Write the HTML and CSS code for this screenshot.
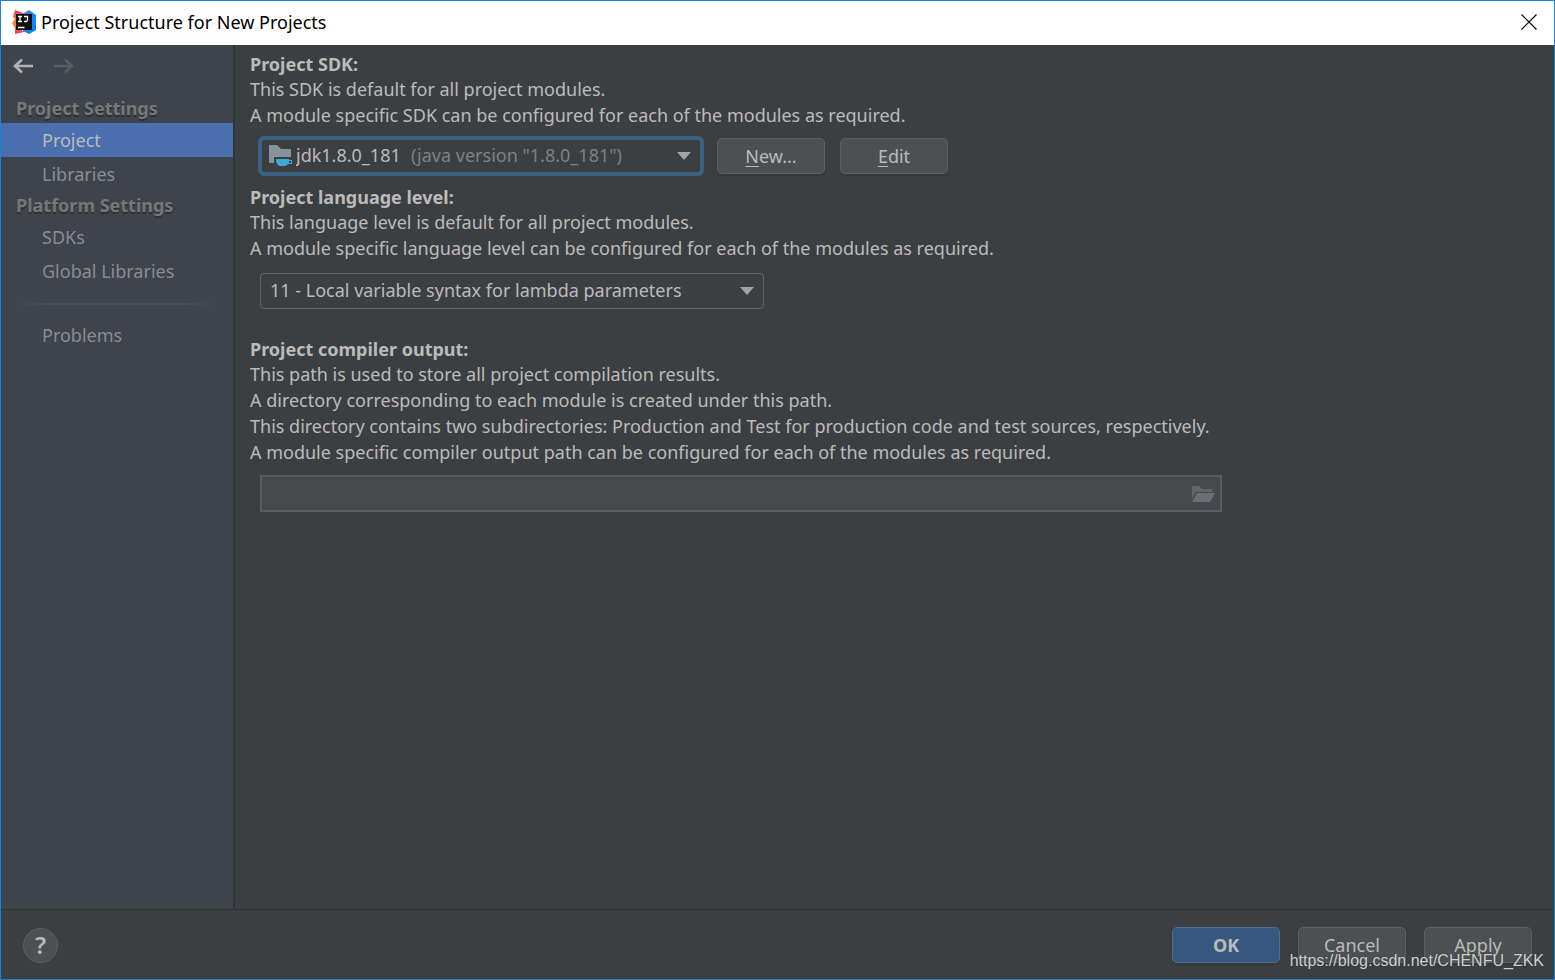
FILE: index.html
```html
<!DOCTYPE html>
<html lang="en">
<head>
<meta charset="utf-8">
<title>Project Structure for New Projects</title>
<link rel="stylesheet" href="styles.css">
</head>
<body>
<div class="window">
  <header class="titlebar">
    <svg class="logo" viewBox="0 0 24 24" aria-hidden="true">
      <defs>
        <linearGradient id="warm" x1="0" y1="0" x2="0" y2="1">
          <stop offset="0" stop-color="#f0325f"/><stop offset=".42" stop-color="#fb7a3a"/><stop offset=".6" stop-color="#fb8a2c"/><stop offset="1" stop-color="#f0325f"/>
        </linearGradient>
        <linearGradient id="cool" x1="0" y1="0" x2="1" y2="1">
          <stop offset="0" stop-color="#a56fb8"/><stop offset=".4" stop-color="#1689f5"/><stop offset="1" stop-color="#087cfa"/>
        </linearGradient>
      </defs>
      <path fill="url(#warm)" d="M3 0 11 3 10 21 13 21 12 22 3 24 3 18 0 13 3 9 1 7z"/>
      <path fill="url(#cool)" d="M10 4 17 0 24 5V20L17 24 11 21z"/>
      <path fill="#111" d="M4 4h16v16H4z"/>
      <path fill="none" stroke="#fff" stroke-width="1.3" d="M6 6.500h4M8 6.500v5M6 11.500h4M12 6.500h3.500v3.500q0 1.500-1.500 1.500h-2M6 17.500h6.500"/>
    </svg>
    <h1 class="title">Project Structure for New Projects</h1>
    <button class="close" type="button" aria-label="Close">
      <svg viewBox="0 0 16 16" width="16" height="16"><path d="M.5.5l15 15M15.500.5l-15 15" fill="none" stroke="#000" stroke-width="1.2"/></svg>
    </button>
  </header>

  <div class="body">
    <aside class="sidebar">
      <div class="history">
        <button class="arrow" type="button" aria-label="Back">
          <svg viewBox="0 0 20 16" width="20" height="16"><path d="M20 8H2M9 1.500 2 8l7 6.500" fill="none" stroke="currentColor" stroke-width="2.600"/></svg>
        </button>
        <button class="arrow" type="button" aria-label="Forward" disabled>
          <svg viewBox="0 0 20 16" width="20" height="16"><path d="M0 8h18M11 1.500 18 8l-7 6.500" fill="none" stroke="currentColor" stroke-width="2.600"/></svg>
        </button>
      </div>
      <nav class="nav">
        <h2 class="group">Project Settings</h2>
        <a class="item selected" href="#project" aria-current="page">Project</a>
        <a class="item" href="#libraries">Libraries</a>
        <h2 class="group">Platform Settings</h2>
        <a class="item" href="#sdks">SDKs</a>
        <a class="item" href="#global-libraries">Global Libraries</a>
        <hr class="divider">
        <a class="item" href="#problems">Problems</a>
      </nav>
    </aside>

    <main class="content">
      <section class="section">
        <label class="heading" for="sdk">Project SDK:</label>
        <p>This SDK is default for all project modules.</p>
        <p>A module specific SDK can be configured for each of the modules as required.</p>
        <div class="row">
          <div class="combo combo-sdk">
            <select id="sdk" class="select"><option>jdk1.8.0_181</option></select>
            <div class="overlay">
              <svg viewBox="0 0 24 22" width="24" height="22" aria-hidden="true">
                <path fill="#87939a" d="M0 0h8l4 4h10v8H5v6H0z"/>
                <path fill="#3fa9d4" d="M7 14h13v1h3v4h-4c-1 1-2 2-3 2h-5c-2 0-4-3-4-7z"/>
                <path fill="#3c3f41" d="M20 16h2v2h-2z"/>
              </svg>
              <span class="version">(java version "1.8.0_181")</span>
              <svg class="caret" viewBox="0 0 14 8" width="14" height="8" aria-hidden="true"><path fill="#a1a4a6" d="M0 0h14L7 8z"/></svg>
            </div>
          </div>
          <button class="button" type="button"><u>N</u>ew...</button>
          <button class="button" type="button"><u>E</u>dit</button>
        </div>
      </section>

      <section class="section section-level">
        <label class="heading" for="level">Project language level:</label>
        <p>This language level is default for all project modules.</p>
        <p>A module specific language level can be configured for each of the modules as required.</p>
        <div class="combo combo-level">
          <select id="level" class="select"><option>11 - Local variable syntax for lambda parameters</option></select>
          <div class="overlay">
            <svg class="caret" viewBox="0 0 14 8" width="14" height="8" aria-hidden="true"><path fill="#a1a4a6" d="M0 0h14L7 8z"/></svg>
          </div>
        </div>
      </section>

      <section class="section section-output">
        <label class="heading" for="output">Project compiler output:</label>
        <p>This path is used to store all project compilation results.</p>
        <p>A directory corresponding to each module is created under this path.</p>
        <p>This directory contains two subdirectories: Production and Test for production code and test sources, respectively.</p>
        <p>A module specific compiler output path can be configured for each of the modules as required.</p>
        <div class="path">
          <input id="output" class="path-input" type="text">
          <button class="browse" type="button" aria-label="Browse">
            <svg viewBox="0 0 24 18" width="24" height="18"><path fill="#5f676b" d="M1 1h7l3 3h10v3H5L1 14z"/><path fill="#667075" d="M6 8h18l-5 9H1z"/></svg>
          </button>
        </div>
      </section>
    </main>
  </div>

  <footer class="footer">
    <button class="help" type="button" aria-label="Help">?</button>
    <div class="actions">
      <button class="button primary" type="button">OK</button>
      <button class="button" type="button">Cancel</button>
      <button class="button" type="button">Apply</button>
    </div>
    <span class="watermark">https://blog.csdn.net/CHENFU_ZKK</span>
  </footer>
</div>
</body>
</html>
```
FILE: styles.css
```css
* { box-sizing: border-box; }

body {
  margin: 0;
  font: 18px/26px "Noto Sans", "Open Sans", sans-serif;
  color: #bbbbbb;
  background: #3c3f41;
}

button, input, select { font: inherit; color: inherit; }

.window {
  display: flex;
  flex-direction: column;
  min-height: 100vh;
  border: 1px solid #1883d7;
}

.titlebar {
  display: flex;
  align-items: center;
  height: 44px;
  padding: 0 17px 2px 11px;
  background: #ffffff;
  color: #000000;
}

.logo { width: 24px; height: 24px; }

.title {
  flex: 1;
  margin: 0 0 0 5px;
  font-size: 18px;
  font-weight: 400;
}

.close, .arrow, .browse {
  display: flex;
  padding: 0;
  border: 0;
  background: none;
}

.body { display: flex; flex: 1; }

.sidebar {
  width: 234px;
  border-right: 2px solid #323537;
  background: #3e434c;
}

.history {
  display: flex;
  gap: 21px;
  padding: 13px 12px 0;
  color: #afb1b3;
}

.arrow:disabled { color: #5a5d60; }

.nav {
  display: flex;
  flex-direction: column;
  padding-top: 20px;
}

.group {
  margin: 0;
  padding-left: 15px;
  font-size: 18px;
  line-height: 29px;
  color: #777777;
  text-shadow: 0 2px 0 #2e3238;
}

.item {
  padding-left: 41px;
  line-height: 34px;
  color: #8b8c8f;
  text-decoration: none;
}

.selected { background: #4b6eaf; color: #bbbbbb; }

.divider {
  width: 206px;
  height: 2px;
  margin: 15px 12px 13px;
  border: 0;
  background: linear-gradient(90deg, transparent, #4f4f50 20%, #4f4f50 80%, transparent);
}

.content { flex: 1; padding: 7px 16px 16px 15px; }

.section-level { margin-top: 9px; }
.section-output { margin-top: 28px; }

.heading { display: block; line-height: 24px; font-weight: 700; }

p { margin: 0; }

.row {
  display: flex;
  align-items: center;
  gap: 15px;
  margin: 8px 0 0 8px;
}

.combo { position: relative; }

.select {
  display: block;
  width: 100%;
  height: 36px;
  padding: 0 40px 2px 9px;
  border: 1px solid #646464;
  border-radius: 4px;
  appearance: none;
  background: #3c3f41;
  outline: none;
}

.combo-sdk { width: 446px; margin-right: -2px; }

.combo-sdk .select {
  height: 40px;
  padding-left: 34px;
  border: 4px solid #3d6185;
  border-radius: 6px;
}

.combo-level { width: 504px; margin: 12px 0 0 10px; }

.overlay {
  position: absolute;
  inset: 0 10px 0 11px;
  display: flex;
  align-items: center;
  pointer-events: none;
}

.version { margin-left: 118px; padding-bottom: 2px; color: #808080; }

.caret { margin-left: auto; }

.combo-sdk .caret { margin-right: 3px; }

.button {
  width: 108px;
  height: 36px;
  padding: 0;
  border: 1px solid #5e6060;
  border-radius: 5px;
  background: #4c5052;
  box-shadow: 0 2px 2px #36393b;
}

.button u { text-underline-offset: 3px; }

.primary { border-color: #4c708c; background: #365880; font-weight: 700; }

.path {
  display: flex;
  align-items: center;
  max-width: 962px;
  height: 37px;
  margin: 10px 0 0 10px;
  padding-right: 5px;
  border: 2px solid #5b5e5f;
  background: #45494a;
}

.path-input {
  flex: 1;
  min-width: 0;
  border: 0;
  outline: none;
  background: none;
}

.footer {
  position: relative;
  display: flex;
  align-items: center;
  justify-content: space-between;
  height: 70px;
  padding: 1px 22px 0;
  border-top: 1px solid #2f3233;
}

.help {
  width: 35px;
  height: 35px;
  padding: 0;
  border: 1px solid #5e6060;
  border-radius: 50%;
  background: #4c5052;
  font-size: 24px;
  font-weight: 600;
}

.actions { display: flex; gap: 18px; }

.watermark {
  position: absolute;
  right: 10px;
  bottom: 8px;
  font: 16px/20px "Liberation Sans", Arial, sans-serif;
  color: #cfcfcf;
  text-shadow: 0 0 1px #333333;
}
```
